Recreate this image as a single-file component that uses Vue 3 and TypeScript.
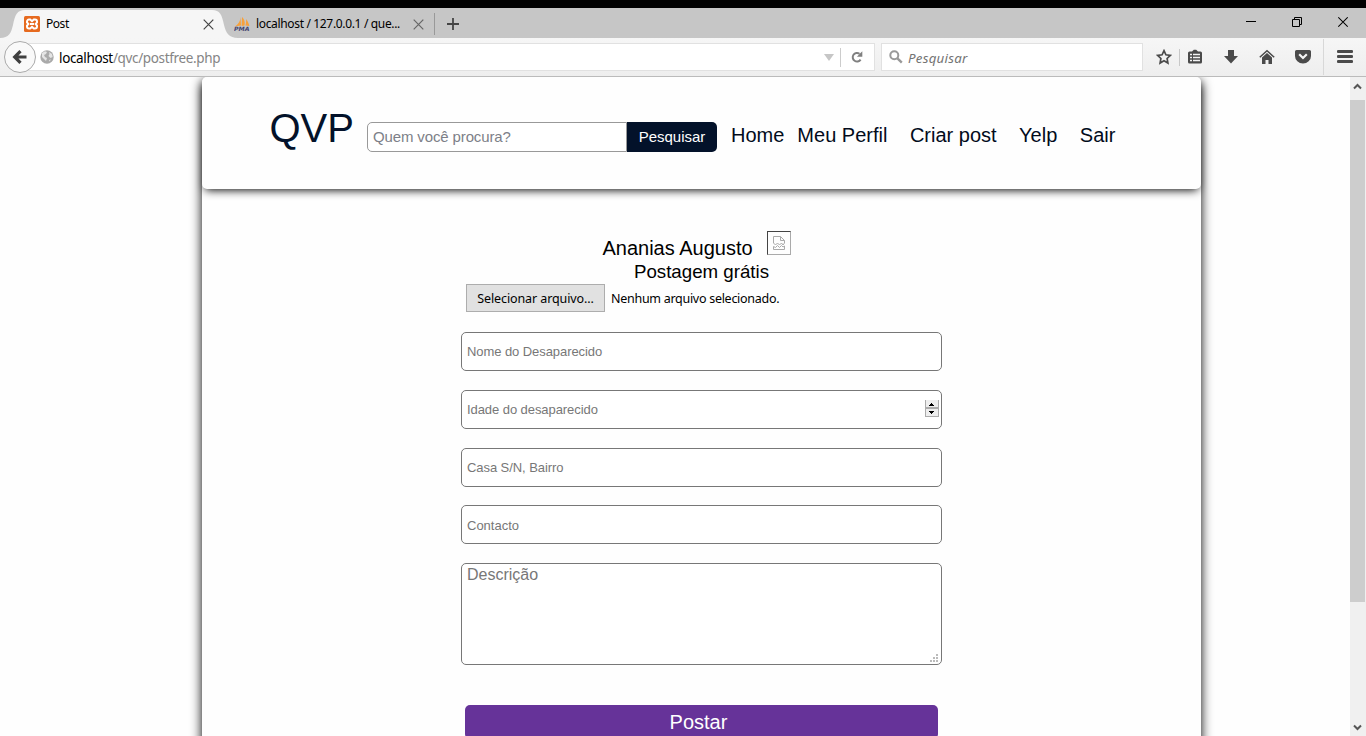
<script setup lang="ts">
import { ref } from 'vue'

interface NavLink { label: string; gap: string }
interface Field { name: string; placeholder: string; numeric?: boolean }

const links: NavLink[] = [
  { label: 'Home', gap: 'g-home' },
  { label: 'Meu Perfil', gap: 'g-perfil' },
  { label: 'Criar post', gap: 'g-wide' },
  { label: 'Yelp', gap: 'g-wide' },
  { label: 'Sair', gap: 'g-wide' },
]
const fields: Field[] = [
  { name: 'nome', placeholder: 'Nome do Desaparecido' },
  { name: 'idade', placeholder: 'Idade do desaparecido', numeric: true },
  { name: 'casa', placeholder: 'Casa S/N, Bairro' },
  { name: 'contacto', placeholder: 'Contacto' },
]
const search = ref('')
const description = ref('')
</script>

<template>
  <div class="screen">
    <div class="strip-top"></div>
    <div class="tabs">
      <svg class="tab-shape" width="246" height="30" viewBox="0 0 246 30">
        <path d="M0 30C9 30 11 25 13 17C15 7 17 2 25 2H212C220 2 222 7 224 17C226 25 229 30 238 30Z" fill="#f6f6f6" />
      </svg>
      <div class="tab tab-active">
        <svg width="16" height="16" viewBox="0 0 16 16">
          <rect width="16" height="16" rx="1.500" fill="#e66a1f" />
          <path d="M5 3.500h1.200L8 5.200l1.800-1.700H11a2 2 0 0 1 2 2v.8L11.600 8 13 9.700v.8a2 2 0 0 1-2 2H9.800L8 10.800l-1.800 1.700H5a2 2 0 0 1-2-2v-.8L4.400 8 3 6.300v-.8a2 2 0 0 1 2-2Z" fill="#e66a1f" stroke="#fff" stroke-width="2" />
          <path d="M6 8h4" stroke="#fff" stroke-width="2" />
        </svg>
        <span class="tab-title">Post</span>
        <svg class="close" width="11" height="11" viewBox="0 0 11 11"><path d="M.7.7l9.600 9.600M10.300.7L.7 10.300" stroke="#444" stroke-width="1.200" /></svg>
      </div>
      <div class="tab tab-second">
        <svg width="16" height="16" viewBox="0 0 16 16">
          <path d="M6.500 1C6.500 5 4.500 8 1 10.500L7 9.500ZM8 1c3 3 3 6 2.500 8.500L7.600 10ZM12 3c2 2.500 3 5 3.400 7L11.400 9.500C12.200 7 12.300 5 12 3Z" fill="#f7a13b" />
          <text x="0" y="15.200" font-size="6" font-weight="bold" font-style="italic" font-family="DejaVu Sans, sans-serif" textLength="15.500" lengthAdjust="spacingAndGlyphs" fill="#44446e">PMA</text>
        </svg>
        <span class="tab-title tab-title-long">localhost / 127.0.0.1 / que...</span>
        <svg class="close" width="11" height="11" viewBox="0 0 11 11"><path d="M.7.7l9.600 9.600M10.300.7L.7 10.300" stroke="#666" stroke-width="1.200" /></svg>
      </div>
      <span class="tab-divider"></span>
      <svg class="plus" width="12" height="12" viewBox="0 0 12 12"><path d="M6 0v12M0 6h12" stroke="#444" stroke-width="1.800" /></svg>
      <div class="window-controls">
        <svg width="10" height="12" viewBox="0 0 10 12"><path d="M0 5.500h10" stroke="#000" /></svg>
        <svg width="10" height="12" viewBox="0 0 10 12"><path d="M.5 3.500h7v7h-7zM2.500 3.500v-2h7v7h-2" fill="none" stroke="#000" /></svg>
        <svg width="10" height="12" viewBox="0 0 10 12"><path d="M.3 1.300l9.400 9.400M9.700 1.300L.3 10.700" stroke="#000" stroke-width="1.100" /></svg>
      </div>
    </div>

    <div class="toolbar">
      <div class="back">
        <svg width="16" height="16" viewBox="0 0 16 16"><path d="M14.500 8H3M8.500 2.200L2.700 8l5.800 5.800" fill="none" stroke="#3f3f3f" stroke-width="3.200" /></svg>
      </div>
      <div class="address">
        <svg class="globe" width="14" height="14" viewBox="0 0 14 14">
          <circle cx="7" cy="7" r="6.700" fill="#aaa" />
          <path d="M2 3l3-1.800 2 .8-1 2-2 1 1 2 2 1-1 3-2-2L2 7ZM9 2l3 2 .7 3-2.200 1L8.500 6l1-2ZM9 10l2-.5-1.500 2Z" fill="#e4e4e4" />
        </svg>
        <span class="url"><b>localhost</b>/qvc/postfree.php</span>
        <svg class="caret" width="10" height="7" viewBox="0 0 10 7"><path d="M0 0h10L5 7z" fill="#c6c6c6" /></svg>
        <span class="address-divider"></span>
        <svg class="reload" width="12" height="12" viewBox="0 0 12 12"><path d="M9.600 8.600A4.300 4.300 0 1 1 8.500 2.700" fill="none" stroke="#808080" stroke-width="2" /><path d="M11.300.3v5.400H5.900L8 3.600z" fill="#808080" /></svg>
      </div>
      <div class="searchbar">
        <svg width="14" height="14" viewBox="0 0 14 14"><circle cx="5.300" cy="5.200" r="4" fill="none" stroke="#999" stroke-width="2" /><path d="M8.200 8.200l4.600 4.500" stroke="#999" stroke-width="2.400" /></svg>
        <span>Pesquisar</span>
      </div>
      <div class="tools">
        <svg width="16" height="16" viewBox="0 0 16 16"><path d="M8 1.700l1.900 4.100 4.500.6-3.300 3.100.8 4.500L8 11.800 4.100 14l.8-4.500L1.600 6.400l4.500-.6z" fill="none" stroke="#4a4a4a" stroke-width="1.700" /></svg>
        <span class="tool-divider"></span>
        <svg width="16" height="16" viewBox="0 0 16 16">
          <path d="M2.500 2.500H5L6.800.800h2.400L11 2.500h2.500a1.500 1.500 0 0 1 1.500 1.500v9a1.500 1.500 0 0 1-1.500 1.500h-11A1.500 1.500 0 0 1 1 13V4a1.500 1.500 0 0 1 1.500-1.500Z" fill="#4a4a4a" />
          <path d="M3 5.500h2M6 5.500h7M3 8.500h2M6 8.500h7M3 11.500h2M6 11.500h7" stroke="#f3f3f3" stroke-width="1.500" />
        </svg>
        <svg width="16" height="16" viewBox="0 0 16 16"><path d="M5 1h6v6h4l-7 7.500L1 7h4z" fill="#4a4a4a" /></svg>
        <svg width="16" height="16" viewBox="0 0 16 16"><path d="M.8 8.300L8 1.700l7.200 6.600" fill="none" stroke="#4a4a4a" stroke-width="1.500" /><path d="M3 8.500l5-4.600 5 4.600V15H9.500v-4h-3v4H3z" fill="#4a4a4a" /></svg>
        <svg width="16" height="16" viewBox="0 0 16 16"><path d="M1.500 1h13A1.500 1.500 0 0 1 16 2.500V7A8 7.500 0 0 1 0 7V2.500A1.500 1.500 0 0 1 1.500 1Z" fill="#4a4a4a" /><path d="M4.200 5.300L8 9l3.800-3.700" fill="none" stroke="#f5f5f5" stroke-width="2.200" /></svg>
        <span class="menu-divider"></span>
        <svg width="16" height="16" viewBox="0 0 16 16"><path d="M1.200 2.500h13.600M1.200 7.500h13.600M1.200 12.500h13.600" stroke="#4a4a4a" stroke-width="3" stroke-linecap="round" /></svg>
      </div>
    </div>

    <div class="viewport">
      <main class="page">
        <header class="header">
          <div class="logo">QVP</div>
          <form class="search" @submit.prevent>
            <input v-model="search" type="text" placeholder="Quem você procura?" />
            <button type="submit">Pesquisar</button>
          </form>
          <nav class="nav">
            <a v-for="link in links" :key="link.label" :class="link.gap">{{ link.label }}</a>
          </nav>
        </header>

        <section class="content">
          <div class="author">
            <span>Ananias Augusto</span>
            <span class="broken">
              <svg width="14" height="16" viewBox="0 0 14 16"><path d="M1.500 8V1.500h7l4 4V8M8.500 1.500v4h4M1.500 8l2 2 2-2 2 2 2-2 1.500 2 1.500-2M1.500 14.500v-3l2 1 2-2 2 2 2-2 1.500 1.500 1.500-1v3.500z" fill="none" stroke="#aaa" /></svg>
            </span>
          </div>
          <h3>Postagem grátis</h3>
          <form class="form" @submit.prevent>
            <div class="file"><button type="button">Selecionar arquivo...</button><span>Nenhum arquivo selecionado.</span></div>
            <div v-for="field in fields" :key="field.name" class="field" :class="field.name">
              <input type="text" :name="field.name" :placeholder="field.placeholder" />
              <span v-if="field.numeric" class="spinner">
                <svg width="14" height="17" viewBox="0 0 14 17">
                  <path d="M0 0h14v17H0z" fill="#ababab" /><path d="M1 0h12v7H1zM1 9h12v7H1z" fill="#eee" />
                  <path d="M4 5h1V4h1V3h1v1h1v1h1v1H4zM4 11h5v1H8v1H7v1H6v-1H5v-1H4z" fill="#000" />
                </svg>
              </span>
            </div>
            <div class="area">
              <textarea v-model="description" placeholder="Descrição"></textarea>
              <svg class="grip" width="8" height="8" viewBox="0 0 8 8"><path d="M6 0h2v2H6zM3 3h2v2H3zM6 3h2v2H6zM0 6h2v2H0zM3 6h2v2H3zM6 6h2v2H6z" fill="#bbb" /></svg>
            </div>
            <button type="submit" class="submit">Postar</button>
          </form>
        </section>
      </main>
      <aside class="scrollbar">
        <svg width="15" height="23" viewBox="0 0 15 23"><path d="M4 11.500L7.500 8l3.500 3.500" fill="none" stroke="#555" stroke-width="2" /></svg>
        <div class="thumb"></div>
        <svg class="down" width="15" height="17" viewBox="0 0 15 17"><path d="M4 6.500l3.500 3.500L11 6.500" fill="none" stroke="#555" stroke-width="2" /></svg>
      </aside>
    </div>
  </div>
</template>

<style>
body { overflow: hidden; }
</style>

<style scoped>
* { box-sizing: border-box; }
svg { display: block; flex: none; }
.screen { width: 1366px; height: 736px; overflow: hidden; display: flex; flex-direction: column; background: #fefefe; font-family: "Liberation Sans", Arial, sans-serif; color: #000; }
.strip-top { height: 8px; flex: none; background: #000; }

.tabs { position: relative; height: 30px; flex: none; display: flex; align-items: center; background: #c6c6c6; font-family: "Noto Sans", "Open Sans", sans-serif; font-size: 12px; }
.tab-shape { position: absolute; left: 0; top: 0; }
.tab { position: relative; display: flex; align-items: center; height: 30px; padding-top: 2px; }
.tab-active { margin-left: 24px; width: 189.500px; }
.tab-second { margin-left: 20.500px; width: 189.500px; }
.tab-title { margin: -1px 0 0 6px; white-space: nowrap; letter-spacing: -0.45px; }
.tab-title-long { letter-spacing: -0.340px; }
.close { margin-left: auto; }
.tab-divider { width: 1px; height: 22px; margin: 2px 0 0 10.500px; background: #999; }
.plus { margin: 2px 0 0 12px; }
.window-controls { display: flex; gap: 36px; margin: -2px 18px 0 auto; }

.toolbar { height: 39px; flex: none; display: flex; align-items: center; background: linear-gradient(#f6f6f6, #eee); border-bottom: 1px solid #bbb; font-family: "Noto Sans", "Open Sans", sans-serif; }
.back { position: relative; z-index: 1; width: 32px; height: 32px; flex: none; margin-left: 4px; display: flex; align-items: center; justify-content: center; border: 1px solid #aaa; border-radius: 50%; background: #f9f9f9; }
.address { width: 857px; height: 28px; margin-left: -18px; padding-left: 21px; display: flex; align-items: center; background: #fff; border: 1px solid #e1e1e1; }
.url { margin: 2px 0 0 5px; font-size: 13.500px; letter-spacing: -0.350px; color: #858585; white-space: nowrap; }
.url b { font-weight: 400; color: #000; }
.caret { margin-left: auto; }
.address-divider { width: 1px; height: 19px; margin: 0 10px 0 6px; background: #ccc; }
.reload { margin-right: 11px; }
.searchbar { width: 262px; height: 28px; margin-left: 6px; padding-left: 7px; display: flex; align-items: center; gap: 5px; background: #fff; border: 1px solid #e1e1e1; color: #737373; font-size: 13.300px; font-style: italic; letter-spacing: .25px; }
.searchbar span { margin-top: 2px; }
.tools { display: flex; align-items: center; margin-left: 13px; }
.tool-divider { width: 1px; height: 17px; margin: 0 7px; background: #c8c8c8; }
.tools svg + svg { margin-left: 20px; }
.menu-divider { width: 1px; height: 36px; margin: 0 13px 0 12px; background: #d8d8d8; }

.viewport { flex: 1; min-height: 0; display: flex; overflow: hidden; }
.page { width: 999px; height: 800px; margin: 0 149px 0 202px; flex: none; border-radius: 5px 5px 0 0; background: #fefefe; box-shadow: 0 4px 12px #000; }
.header { height: 112px; padding-left: 67px; display: flex; align-items: flex-start; border-radius: 5px; background: #fefefe; box-shadow: 0 4px 10px -3px #000; color: #03122a; }
.logo { margin-top: 28px; width: 98px; padding-left: .5px; font-size: 40px; line-height: 46px; }
.search { display: flex; margin-top: 45px; }
.search input { width: 260px; height: 30px; padding: 0 5px 2px; border: 1px solid #999; border-radius: 5px 0 0 5px; font: 15px "Liberation Sans", Arial, sans-serif; letter-spacing: -.13px; outline: 0; background: #fff; }
.search input::placeholder { color: #7d7f88; opacity: 1; }
.search button { width: 90px; height: 30px; padding: 0 0 2px; border: 0; border-radius: 0 5px 5px 0; background: #03122a; color: #fff; font: 15px "Liberation Sans", Arial, sans-serif; }
.nav { display: flex; margin-top: 46px; font-size: 20px; line-height: 24px; white-space: nowrap; color: #020b1b; }
.g-home { margin-left: 14px; }
.g-perfil { margin-left: 13px; }
.g-wide { margin-left: 22.500px; }

.content { width: 481px; margin: 0 auto; padding-top: 42px; }
.author { display: flex; justify-content: center; align-items: flex-start; margin-right: 21px; height: 30px; font-size: 20px; line-height: 24px; }
.author > span:first-child { margin: 5px 14px 0 11px; }
.broken { width: 24px; height: 24px; display: flex; align-items: center; justify-content: center; border: 1px solid #aaa; border-top-color: #444; border-left-color: #444; }
h3 { margin: 0; text-align: center; font-size: 18.720px; font-weight: 400; line-height: 21px; }
.file { display: flex; align-items: center; margin: 2px 0 20px 5px; font: 12.500px "Noto Sans", "Open Sans", sans-serif; }
.file button { width: 139px; height: 28px; padding: 0; border: 1px solid #adadad; background: #e1e1e1; font: inherit; color: #000; white-space: nowrap; letter-spacing: -.1px; }
.file span { margin-left: 6px; letter-spacing: -.28px; white-space: nowrap; }
.field { position: relative; height: 39px; margin-bottom: 19px; }
.casa { margin-bottom: 18px; }
.field input { width: 100%; height: 39px; padding: 0 5px; border: 1px solid #777; border-radius: 5px; outline: 0; font: 13px "Liberation Sans", Arial, sans-serif; letter-spacing: -.07px; background: #fff; }
.contacto input { padding-top: 2px; letter-spacing: 0; }
.field input::placeholder, .area textarea::placeholder { color: #777; opacity: 1; }
.spinner { position: absolute; right: 3px; top: 10px; }
.area { position: relative; height: 102px; }
.area textarea { display: block; width: 100%; height: 102px; padding: 2px 5px; border: 1px solid #777; border-radius: 5px; resize: none; outline: 0; font: 16px "Liberation Sans", Arial, sans-serif; background: #fff; }
.grip { position: absolute; right: 4px; bottom: 3px; }
.submit { display: block; width: 473px; height: 34px; margin: 40px 0 0 4px; padding: 0 6px 0 0; border: 0; border-radius: 5px; background: #639; color: #fff; font: 20px "Liberation Sans", Arial, sans-serif; }

.scrollbar { position: relative; width: 16px; flex: none; display: flex; flex-direction: column; background: #f0f0f0; }
.thumb { width: 15px; height: 502px; background: #cdcdcd; }
.down { margin-top: auto; }
</style>
